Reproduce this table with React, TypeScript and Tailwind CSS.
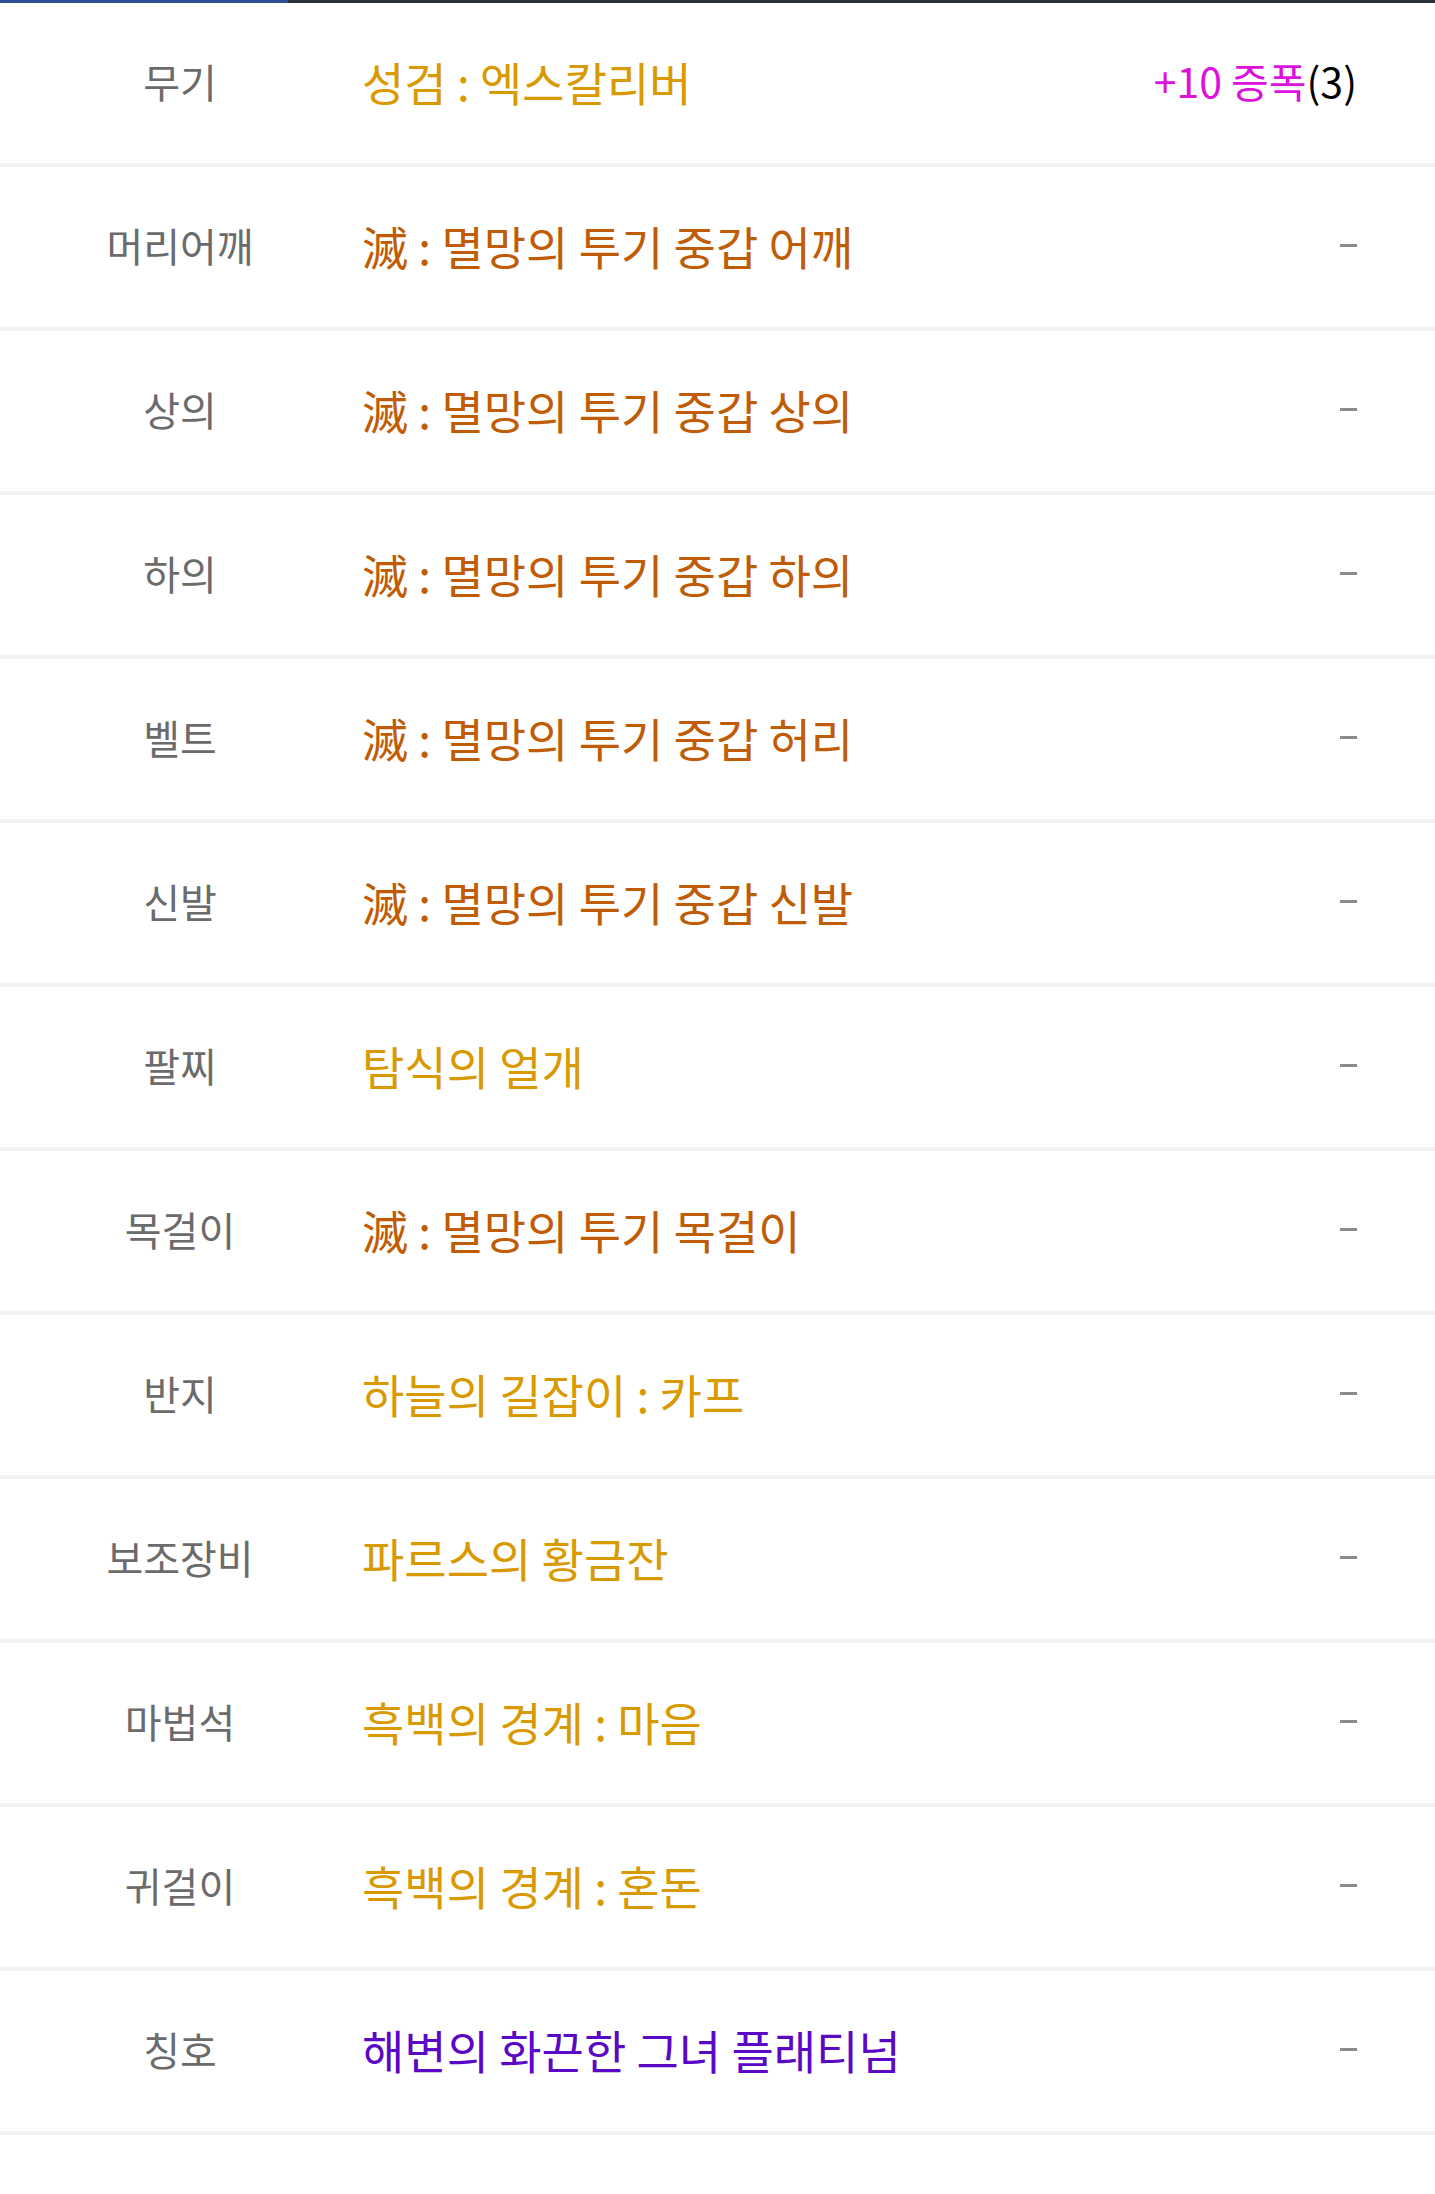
import { Fragment } from 'react';

type Item = {
  slot: string;
  name: string;
  color: string;
  extra?: boolean;
};

const items: Item[] = [
  { slot: '무기', name: '성검 : 엑스칼리버', color: 'text-[#d89a00]', extra: true },
  { slot: '머리어깨', name: '滅 : 멸망의 투기 중갑 어깨', color: 'text-[#c05c06]' },
  { slot: '상의', name: '滅 : 멸망의 투기 중갑 상의', color: 'text-[#c05c06]' },
  { slot: '하의', name: '滅 : 멸망의 투기 중갑 하의', color: 'text-[#c05c06]' },
  { slot: '벨트', name: '滅 : 멸망의 투기 중갑 허리', color: 'text-[#c05c06]' },
  { slot: '신발', name: '滅 : 멸망의 투기 중갑 신발', color: 'text-[#c05c06]' },
  { slot: '팔찌', name: '탐식의 얼개', color: 'text-[#d89a00]' },
  { slot: '목걸이', name: '滅 : 멸망의 투기 목걸이', color: 'text-[#c05c06]' },
  { slot: '반지', name: '하늘의 길잡이 : 카프', color: 'text-[#d89a00]' },
  { slot: '보조장비', name: '파르스의 황금잔', color: 'text-[#d89a00]' },
  { slot: '마법석', name: '흑백의 경계 : 마음', color: 'text-[#d89a00]' },
  { slot: '귀걸이', name: '흑백의 경계 : 혼돈', color: 'text-[#d89a00]' },
  { slot: '칭호', name: '해변의 화끈한 그녀 플래티넘', color: 'text-[#5a08c6]' },
];

const App = () => {
  return (
    <div className="min-h-screen bg-white font-['Noto_Sans_CJK_KR','Noto_Sans',sans-serif]">
      {/* top tab indicator */}
      <div className="flex h-[3px]">
        <div className="w-[288px] bg-[#2f4f98]"></div>
        <div className="flex-1 bg-[#2b303c]"></div>
      </div>

      <div className="flex flex-col">
        {items.map((item) => (
          <Fragment key={item.slot}>
            <div className="flex h-[160px] items-center pb-[4px]">
              <div className="w-[360px] shrink-0 text-center text-[40px] leading-none text-[#6b6b6b]">
                {item.slot}
              </div>
              <div className={`flex-1 pl-[2px] text-[46px] leading-none ${item.color}`}>{item.name}</div>
              <div className="pr-[78px] text-right">
                {item.extra ? (
                  <span className="text-[41px] leading-none">
                    <span className="text-[#dd11dd]">+10 증폭</span>
                    <span className="text-black">(3)</span>
                  </span>
                ) : (
                  <div className="h-[3px] w-[17px] bg-[#8a8a8a]"></div>
                )}
              </div>
            </div>
            <div className="h-[4px] bg-[#f2f2f2]"></div>
          </Fragment>
        ))}
      </div>
    </div>
  );
};

export default App;
